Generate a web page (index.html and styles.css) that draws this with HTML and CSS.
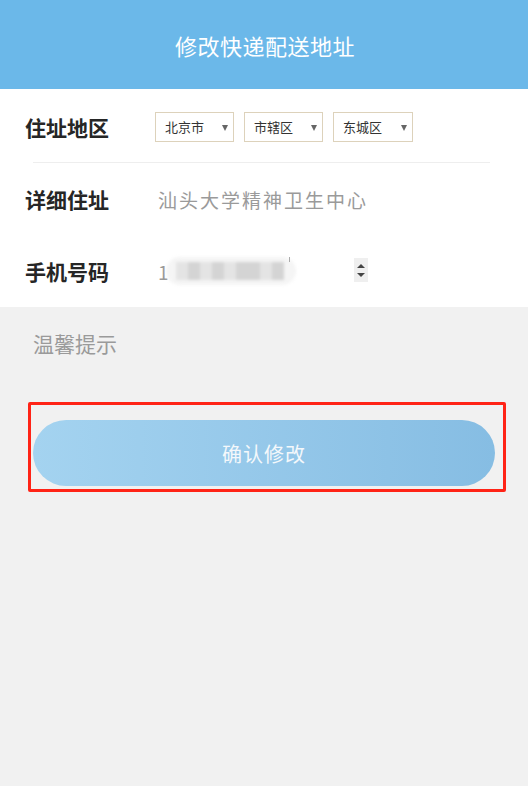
FILE: index.html
```html
<!DOCTYPE html>
<html lang="zh-CN">
<head>
    <meta charset="UTF-8">
    <meta name="viewport" content="width=device-width, initial-scale=1.0">
    <title>修改快递配送地址</title>
    <link rel="stylesheet" href="styles.css">
</head>
<body>
    <header class="topbar">修改快递配送地址</header>

    <div class="form">
        <div class="row">
            <span class="label">住址地区</span>
            <div class="selects">
                <div class="select">北京市<span class="caret"></span></div>
                <div class="select">市辖区<span class="caret"></span></div>
                <div class="select">东城区<span class="caret"></span></div>
            </div>
        </div>
        <div class="divider"></div>
        <div class="row">
            <span class="label">详细住址</span>
            <span class="placeholder">汕头大学精神卫生中心</span>
        </div>
        <div class="row">
            <span class="label">手机号码</span>
            <div class="phone">
                <span class="digit">1</span>
                <div class="masked">
                    <i></i><i class="d"></i><i></i><i class="d"></i><i></i><i class="d"></i><i class="d"></i><i></i><i class="d"></i>
                </div>
                <span class="tick"></span>
                <div class="spinner">
                    <span class="up"></span>
                    <span class="down"></span>
                </div>
            </div>
        </div>
    </div>

    <p class="tip">温馨提示</p>

    <div class="highlight">
        <button class="submit">确认修改</button>
    </div>
</body>
</html>
```

FILE: styles.css
```css
:root {
    --brand: #6bb8e9;
    --page-bg: #f1f1f1;
    --text-dark: #2b2b2b;
    --text-muted: #9a9a9a;
}
* {
    box-sizing: border-box;
}
body {
    margin: 0;
    background-color: var(--page-bg);
    font-family: "Noto Sans CJK SC", "Microsoft YaHei", sans-serif;
    color: var(--text-dark);
}
.topbar {
    height: 89px;
    background-color: var(--brand);
    color: #fff;
    font-size: 22px;
    letter-spacing: 0.5px;
    display: flex;
    align-items: center;
    justify-content: center;
    padding-left: 2px;
}
.form {
    background-color: #fff;
}
.row {
    height: 72px;
    display: flex;
    align-items: center;
    padding-left: 25px;
}
.row:first-child {
    height: 73px;
    padding-top: 2px;
}
.label {
    width: 132px;
    flex-shrink: 0;
    font-size: 21px;
    font-weight: bold;
    color: #262626;
}
.selects {
    display: flex;
    gap: 10px;
    margin-left: -2px;
}
.select {
    width: 79px;
    height: 30px;
    border: 1px solid #ddd2bb;
    padding-left: 9px;
    font-size: 13px;
    color: #333;
    display: flex;
    align-items: center;
    position: relative;
}
.select:nth-child(3) {
    width: 80px;
}
.caret {
    position: absolute;
    right: 5px;
    top: 12px;
    border-left: 3px solid transparent;
    border-right: 3px solid transparent;
    border-top: 6px solid #666;
}
.divider {
    height: 1px;
    background-color: #eeeeee;
    margin: 0 38px 0 33px;
}
.placeholder {
    font-size: 19px;
    letter-spacing: 2px;
    color: var(--text-muted);
    margin-left: 1px;
}
.phone {
    display: flex;
    align-items: center;
    width: 212px;
    height: 28px;
    position: relative;
    margin-left: 1px;
}
.digit {
    font-size: 19px;
    color: #999;
}
.masked {
    display: flex;
    height: 28px;
    margin-left: -3px;
    padding: 5px 12px 5px 10px;
    background-color: #f5f5f5;
    border-radius: 14px;
    filter: blur(1.6px);
}
.masked i {
    display: block;
    width: 12px;
    height: 18px;
    background-color: #e4e4e4;
}
.masked i.d {
    background-color: #d4d4d4;
}
.tick {
    position: absolute;
    left: 131px;
    top: 0;
    width: 1px;
    height: 5px;
    background-color: #aaa;
}
.spinner {
    position: absolute;
    right: 2px;
    top: 1px;
    width: 14px;
    height: 24px;
    background-color: #efefef;
    display: flex;
    flex-direction: column;
    align-items: center;
    justify-content: center;
    gap: 5px;
}
.spinner .up {
    border-left: 4px solid transparent;
    border-right: 4px solid transparent;
    border-bottom: 4px solid #444;
}
.spinner .down {
    border-left: 4px solid transparent;
    border-right: 4px solid transparent;
    border-top: 4px solid #444;
}
.tip {
    margin: 22px 0 0 33px;
    font-size: 21px;
    line-height: 28px;
    color: var(--text-muted);
}
.highlight {
    margin: 45px 0 0 28px;
    width: 478px;
    height: 90px;
    border: 3px solid #ff2316;
    border-radius: 2px;
    padding: 15px 0 0 2px;
}
.submit {
    display: block;
    width: 462px;
    height: 66px;
    border: none;
    border-radius: 33px;
    background: linear-gradient(to right, #a4d3f0, #86bde3);
    color: #f4f8fb;
    font-family: inherit;
    font-size: 20px;
    letter-spacing: 1px;
    cursor: pointer;
}
```
